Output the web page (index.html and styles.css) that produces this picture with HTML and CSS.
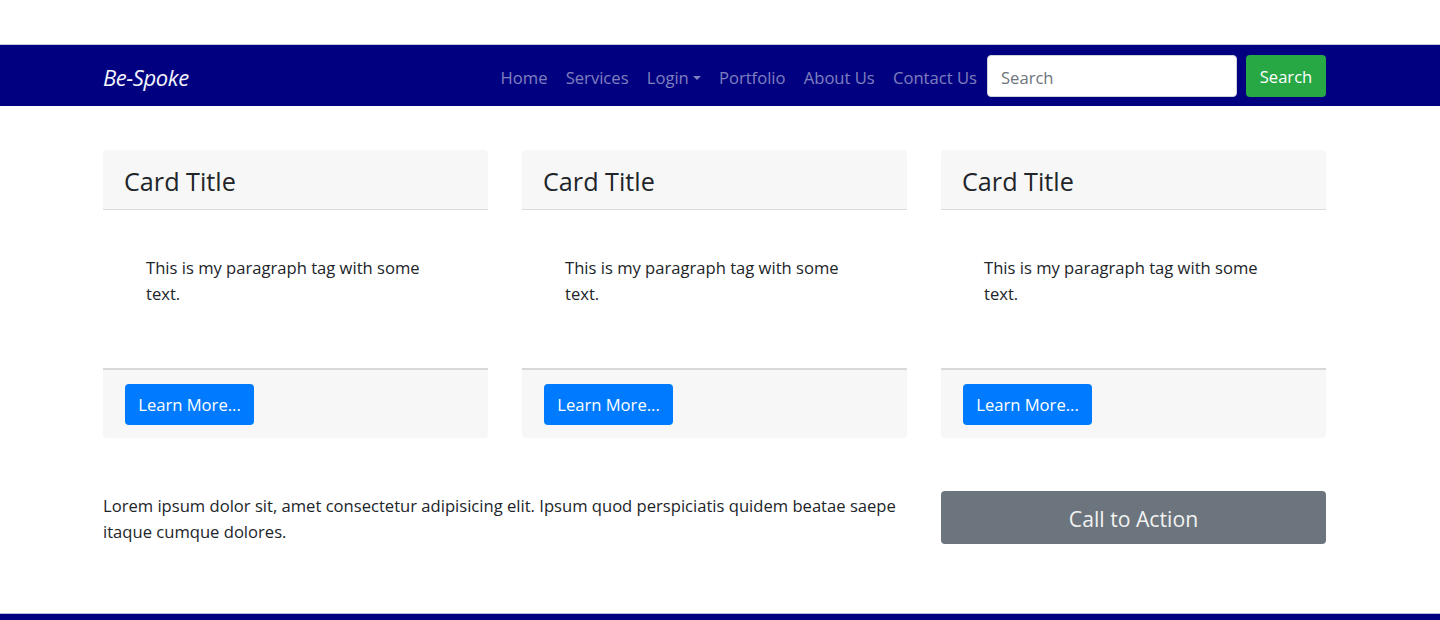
FILE: index.html
```html
<!DOCTYPE html>
<html lang="en">
<head>
<meta charset="utf-8">
<title>Be-Spoke</title>
<link rel="stylesheet" href="styles.css">
</head>
<body>
<div class="page">
  <nav class="navbar">
    <div class="nav-inner">
      <a class="brand" href="#">Be-Spoke</a>
      <ul class="nav-links">
        <li><a href="#">Home</a></li>
        <li><a href="#">Services</a></li>
        <li><a href="#" class="dropdown">Login<span class="caret"></span></a></li>
        <li><a href="#">Portfolio</a></li>
        <li><a href="#">About Us</a></li>
        <li><a href="#">Contact Us</a></li>
      </ul>
      <form class="search-form">
        <input class="search-input" type="text" placeholder="Search">
        <button class="btn btn-green" type="button">Search</button>
      </form>
    </div>
  </nav>

  <main class="content">
    <section class="cards">
      <div class="card">
        <div class="card-header"><h3>Card Title</h3></div>
        <div class="card-body"><p>This is my paragraph tag with some text.</p></div>
        <div class="card-footer"><button class="btn btn-blue" type="button">Learn More...</button></div>
      </div>
      <div class="card">
        <div class="card-header"><h3>Card Title</h3></div>
        <div class="card-body"><p>This is my paragraph tag with some text.</p></div>
        <div class="card-footer"><button class="btn btn-blue" type="button">Learn More...</button></div>
      </div>
      <div class="card">
        <div class="card-header"><h3>Card Title</h3></div>
        <div class="card-body"><p>This is my paragraph tag with some text.</p></div>
        <div class="card-footer"><button class="btn btn-blue" type="button">Learn More...</button></div>
      </div>
    </section>

    <section class="cta-row">
      <p class="lead-text">Lorem ipsum dolor sit, amet consectetur adipisicing elit. Ipsum quod perspiciatis quidem beatae saepe itaque cumque dolores.</p>
      <div class="cta-col"><button class="btn btn-gray" type="button">Call to Action</button></div>
    </section>
  </main>

  <footer class="footer"></footer>
</div>
</body>
</html>
```

FILE: styles.css
```css
* { box-sizing: border-box; }

html, body {
  margin: 0;
  padding: 0;
  background: #ffffff;
}

body {
  font-family: "Open Sans", "Noto Sans", sans-serif;
  font-size: 16.6px;
  color: #212529;
  overflow: hidden;
}

.page {
  padding-top: 44px;
  height: 620px;
  overflow: hidden;
}

/* Navbar */
.navbar {
  background: #000080;
  height: 62px;
  border-top: 1px solid #c8c8e0;
}

.nav-inner {
  margin-left: 103px;
  width: 1223px;
  height: 100%;
  display: flex;
  align-items: center;
}

.brand {
  font-family: "Open Sans", sans-serif;
  font-style: italic;
  font-size: 22px;
  color: #f4f4fb;
  text-decoration: none;
  letter-spacing: -0.4px;
  padding-top: 3px;
}

.nav-links {
  list-style: none;
  margin: 0 0 0 auto;
  padding: 3px 0 0;
  display: flex;
  align-items: center;
}

.nav-links a {
  display: block;
  padding: 0 9.1px;
  color: rgba(255, 255, 255, 0.5);
  text-decoration: none;
  font-size: 16.6px;
}

.caret {
  display: inline-block;
  margin-left: 4px;
  vertical-align: 4px;
  border-top: 4px solid rgba(255, 255, 255, 0.5);
  border-left: 4px solid transparent;
  border-right: 4px solid transparent;
}

.search-form {
  display: flex;
  align-items: center;
  margin-left: 1px;
}

.search-input {
  width: 250px;
  height: 42px;
  border: 1px solid #ced4da;
  border-radius: 4px;
  padding: 3px 13px 0;
  font-family: inherit;
  font-size: 16.6px;
  color: #495057;
  background: #fff;
}

.search-input::placeholder { color: #6c757d; }

.btn {
  font-family: inherit;
  border: none;
  border-radius: 4px;
  cursor: pointer;
}

.btn-green {
  margin-left: 9px;
  width: 80px;
  height: 42px;
  padding-top: 3px;
  background: #28a745;
  color: #fff;
  font-size: 16.6px;
}

/* Cards */
.content {
  margin-left: 103px;
  width: 1223px;
  padding-top: 44px;
}

.cards {
  display: grid;
  grid-template-columns: repeat(3, 385px);
  column-gap: 34px;
}

.card {
  background: #fff;
  border-radius: 4px;
  overflow: hidden;
  display: flex;
  flex-direction: column;
  height: 288px;
}

.card-header {
  background: #f7f7f7;
  border-bottom: 1px solid #dcdcdc;
  height: 60px;
  padding: 3px 21px 0;
  display: flex;
  align-items: center;
}

.card-header h3 {
  margin: 0;
  font-weight: 400;
  font-size: 25.2px;
  color: #212529;
}

.card-body {
  flex: 1;
  padding: 45px 43px 0;
}

.card-body p {
  margin: 0;
  line-height: 26px;
}

.card-footer {
  background: #f7f7f7;
  border-top: 2px solid #d9d9d9;
  height: 70px;
  padding: 0 22px;
  display: flex;
  align-items: center;
}

.btn-blue {
  background: #007bff;
  color: #fff;
  height: 41px;
  width: 129px;
  font-size: 16.6px;
  padding: 1px 0 0;
}

/* CTA row */
.cta-row {
  display: grid;
  grid-template-columns: 804px 385px;
  column-gap: 34px;
  margin-top: 53px;
  align-items: start;
}

.lead-text {
  margin: 0;
  padding-top: 2px;
  line-height: 26px;
}

.btn-gray {
  width: 385px;
  height: 53px;
  padding-top: 3px;
  background: #6c757d;
  color: #f2f2f2;
  font-size: 21.2px;
}

/* Footer */
.footer {
  margin-top: 68px;
  height: 40px;
  background: #000080;
  border-top: 1px solid #b8b8d8;
}
```
